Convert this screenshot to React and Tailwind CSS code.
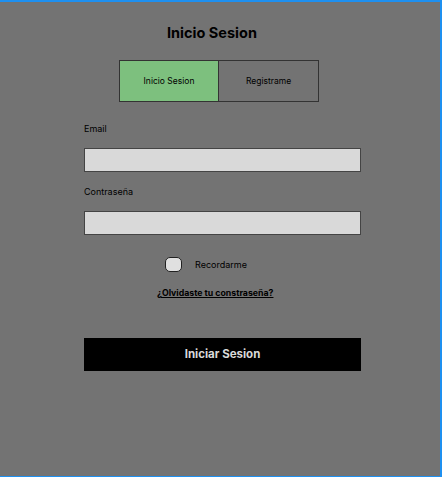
import { useState } from 'react';

// Pantalla de inicio de sesion
const App = () => {
  const [tab, setTab] = useState('login');
  const [remember, setRemember] = useState(false);

  return (
    <div
      className="w-[442px] h-[477px] bg-[#737373] border-t-2 border-r-2 border-b border-[#1e90f0] flex flex-col text-black"
      style={{ fontFamily: 'Inter, "Noto Sans", sans-serif' }}
    >
      {/* titulo */}
      <h1 className="mt-[21px] ml-[167px] text-[14.5px] leading-[20px] font-bold">Inicio Sesion</h1>

      {/* tabs */}
      <div className="mt-[17px] ml-[119px] flex w-[200px] h-[42px] border border-[#333]">
        <button
          onClick={() => setTab('login')}
          className={`w-[99px] h-full text-[8.5px] border-r border-[#333] ${tab === 'login' ? 'bg-[#7dc07e]' : 'bg-[#737373]'}`}
        >
          Inicio Sesion
        </button>
        <button
          onClick={() => setTab('register')}
          className={`flex-1 h-full text-[8.5px] ${tab === 'register' ? 'bg-[#7dc07e]' : 'bg-[#737373]'}`}
        >
          Registrame
        </button>
      </div>

      {/* campos */}
      <div className="ml-[84px] w-[277px] flex flex-col">
        <label className="mt-[21px] text-[9px] leading-[12px]">Email</label>
        <input
          type="email"
          className="mt-[13px] h-[24px] bg-[#d9d9d9] border border-[#444] outline-none px-2 text-[10px]"
        />
        <label className="mt-[14px] text-[9px] leading-[12px]">Contraseña</label>
        <input
          type="password"
          className="mt-[13px] h-[24px] bg-[#d9d9d9] border border-[#444] outline-none px-2 text-[10px]"
        />
      </div>

      {/* recordarme */}
      <div className="mt-[22px] ml-[165px] flex items-center">
        <button
          onClick={() => setRemember(!remember)}
          className="w-[17px] h-[15px] rounded-[5px] bg-[#e0e0e0] border border-[#222]"
        />
        <span className="ml-[13px] text-[9px] leading-[12px]">Recordarme</span>
      </div>

      <a href="#" className="mt-[15px] ml-[157px] text-[8.75px] leading-[12px] font-bold underline">
        ¿Olvidaste tu constraseña?
      </a>

      <button className="mt-[39px] ml-[84px] w-[277px] h-[33px] bg-black text-[#d9d9d9] text-[11.5px] font-bold">
        Iniciar Sesion
      </button>
    </div>
  );
};

export default App;
